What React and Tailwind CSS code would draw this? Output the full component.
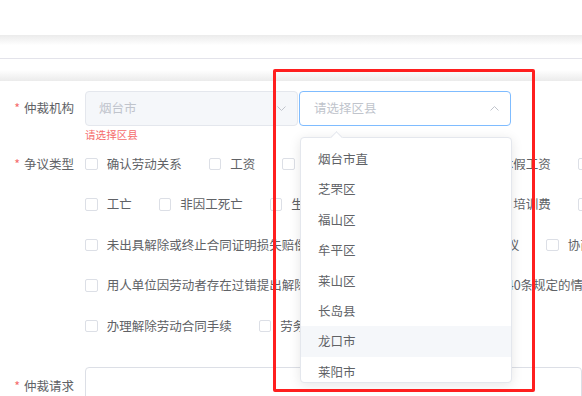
import React from "react";

const rows = [
  ["确认劳动关系", "工资", "加班费", "经济补偿金", "休假工资", "解除劳动合同"],
  ["工亡", "非因工死亡", "生育津贴", "社会保险待遇", "培训费", "其他"],
  [
    "未出具解除或终止合同证明损失赔偿及未办理档案和社会保险关系转移争议",
    "协商解除劳动合同",
  ],
  ["用人单位因劳动者存在过错提出解除劳动合同但不符合《劳动合同法》第40条规定的情形"],
  ["办理解除劳动合同手续", "劳务派遣"],
];

const districts = ["烟台市直", "芝罘区", "福山区", "牟平区", "莱山区", "长岛县", "龙口市", "莱阳市", "莱州市"];

function Label({ text }) {
  return (
    <div className="w-[85px] shrink-0 flex items-center justify-end pr-[11px] text-[12.5px] text-[#606266]">
      <span className="text-[#f56c6c] mr-[4px]">*</span>
      {text}
    </div>
  );
}

function Checkbox({ label }) {
  return (
    <div className="flex items-center shrink-0 mr-[26.8px]">
      <span className="w-[12.5px] h-[12.5px] border border-[#dcdfe6] rounded-[2px] bg-white shrink-0" />
      <span className="ml-[9.2px]">{label}</span>
    </div>
  );
}

export default function App() {
  return (
    <div className="relative w-[582px] h-[396px] overflow-hidden bg-white font-['Noto_Sans_CJK_SC',sans-serif] leading-none whitespace-nowrap">
      {/* header band */}
      <div className="h-[35px]" />
      <div className="h-[23px] bg-gradient-to-b from-[#ebebeb] via-white via-[45%] to-white" />
      <div className="h-px bg-[#e3e3ea]" />
      <div className="h-[22px] bg-gradient-to-b from-white via-white via-[50%] to-[#ebebeb]" />

      {/* form */}
      <div className="pt-[10px]">
        <div className="flex h-[35px]">
          <Label text="仲裁机构" />
          <div className="flex">
            <div className="w-[213px] h-[35px] border border-[#e4e7ed] bg-[#f5f7fa] rounded-[4px] flex items-center justify-between pl-[13px] pr-[11px] text-[12.5px] text-[#c0c4cc]">
              烟台市
              <svg width="9" height="5" viewBox="0 0 9 5" fill="none" stroke="#c0c4cc" strokeWidth="1">
                <polyline points="0.5,0.5 4.5,4.5 8.5,0.5" />
              </svg>
            </div>
            <div className="ml-px w-[212px] h-[35px] border border-[#7fbcff] rounded-[4px] bg-white flex items-center justify-between pl-[14px] pr-[11px] text-[12.5px] text-[#c0c4cc]">
              请选择区县
              <svg width="9" height="5" viewBox="0 0 9 5" fill="none" stroke="#c0c4cc" strokeWidth="1">
                <polyline points="0.5,4.5 4.5,0.5 8.5,4.5" />
              </svg>
            </div>
          </div>
        </div>
        <div className="h-[17.75px] pl-[85px] flex items-center text-[10.6px] text-[#f56c6c]">请选择区县</div>

        <div className="flex">
          <div className="w-[85px] shrink-0 h-[40.5px] flex items-center justify-end pr-[11px] text-[12.5px] text-[#606266]">
            <span className="text-[#f56c6c] mr-[4px]">*</span>
            争议类型
          </div>
          <div className="flex flex-col text-[12.5px] text-[#606266]">
            {rows.map((row, i) => (
              <div key={i} className="h-[40.5px] flex items-center">
                {row.map((label) => (
                  <Checkbox key={label} label={label} />
                ))}
              </div>
            ))}
          </div>
        </div>

        <div className="flex mt-[20.75px]">
          <div className="w-[85px] shrink-0 h-[38px] flex items-center justify-end pr-[11px] text-[12.5px] text-[#606266]">
            <span className="text-[#f56c6c] mr-[4px]">*</span>
            仲裁请求
          </div>
          <div className="w-[520px] h-[60px] border border-[#dcdfe6] rounded-[4px] bg-white" />
        </div>
      </div>

      {/* district dropdown */}
      <div className="absolute left-[300px] top-[137px] w-[212px] h-[246px] bg-white border border-[#e4e7ed] rounded-[4px] shadow-[0_2px_12px_rgba(0,0,0,0.1)]">
        <div className="absolute -top-[5px] left-[31px] w-[9px] h-[9px] bg-white border-l border-t border-[#e4e7ed] rotate-45" />
        <div className="h-full overflow-hidden rounded-[4px] pt-[6px] text-[12.5px] text-[#606266]">
          {districts.map((d) => (
            <div
              key={d}
              className={
                d === "龙口市"
                  ? "h-[30.4px] flex items-center pl-[17px] bg-[#f5f7fa]"
                  : "h-[30.4px] flex items-center pl-[17px]"
              }
            >
              {d}
            </div>
          ))}
        </div>
      </div>

      {/* red highlight */}
      <div className="absolute left-[273px] top-[69px] w-[262px] h-[323px] border-[3px] border-[#ff1f1f] rounded-[2px]" />
    </div>
  );
}
